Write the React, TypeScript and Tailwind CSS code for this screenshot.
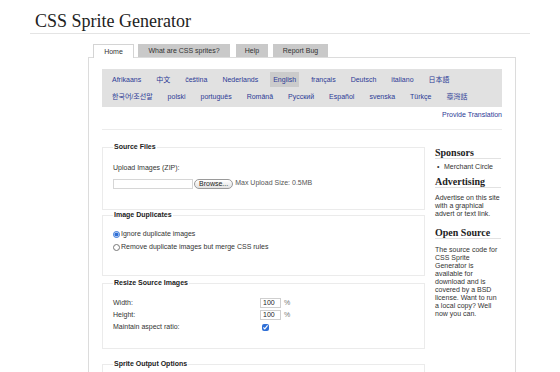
import React from "react";

const row1 = ["Afrikaans", "中文", "čeština", "Nederlands", "English", "français", "Deutsch", "italiano", "日本語"];
const row2 = ["한국어/조선말", "polski", "português", "Română", "Русский", "Español", "svenska", "Türkçe", "臺灣話"];

const LangRow: React.FC<{ items: string[] }> = ({ items }) => (
  <div className="flex h-[17px] items-center gap-x-[9px]">
    {items.map((l) => (
      <span
        key={l}
        className={
          "px-[3px] h-[15px] leading-[15px] text-[7px] text-[#2c3a96] " +
          (l === "English" ? "bg-[#cbcbcb]" : "")
        }
      >
        {l}
      </span>
    ))}
  </div>
);

const SideHead: React.FC<{ children: React.ReactNode; className?: string }> = ({ children, className }) => (
  <h3
    className={
      "font-['Liberation_Serif',serif] font-bold text-[10px] leading-[10px] text-[#222] border-b border-[#e2e2e2] " +
      (className || "")
    }
  >
    {children}
  </h3>
);

export default function App() {
  return (
    <div className="w-[560px] h-[372px] overflow-hidden bg-white text-[#333] font-['Liberation_Sans','Noto_Sans_CJK_SC',Arial,sans-serif]">
      <div className="px-[30px]">
        <h1 className="h-[34px] pt-[11px] pl-[5px] border-b border-[#e4e4e4] font-['Liberation_Serif',serif] text-[18px] leading-[20px] text-[#222]">
          CSS Sprite Generator
        </h1>
      </div>

      {/* tabs */}
      <div className="ml-[93px] mt-[10px] flex items-end text-[7px] text-[#333]">
        <div className="relative z-10 -mb-px w-[41px] h-[14px] leading-[13px] text-center bg-white border-l border-t border-r border-[#d4d4d4]">
          Home
        </div>
        <div className="ml-[4px] w-[92px] h-[13px] leading-[13px] text-center bg-[#c9c9c9]">What are CSS sprites?</div>
        <div className="ml-[6px] w-[32px] h-[13px] leading-[13px] text-center bg-[#c9c9c9]">Help</div>
        <div className="ml-[5px] w-[55px] h-[13px] leading-[13px] text-center bg-[#c9c9c9]">Report Bug</div>
      </div>

      {/* panel */}
      <div className="ml-[88px] w-[428px] h-[400px] border border-[#dcdcdc] px-[13px] pt-[11px]">
        <div className="bg-[#e1e1e1] pl-[7px] py-[2px]">
          <LangRow items={row1} />
          <LangRow items={row2} />
        </div>
        <div className="h-[23px] border-b border-[#ececec] pt-[3px] text-right text-[7px] leading-[10px] text-[#2c3a96]">
          Provide Translation
        </div>

        <div className="flex items-start pt-[12px]">
          <div className="w-[323px] text-[7px] text-[#333]">
            <fieldset className="border border-[#ebebeb] px-[10px] pb-[20px]">
              <legend className="px-[1px] font-bold leading-[10px] text-[#222]">Source Files</legend>
              <div className="mt-[11px] leading-[10px]">Upload Images (ZIP):</div>
              <div className="mt-[5px] flex items-center h-[11px]">
                <div className="w-[80px] h-[10px] border border-[#d6d6d6] bg-white" />
                <div className="ml-[1px] h-[10px] px-[4px] leading-[8px] rounded-full border border-[#9a9a9a] bg-gradient-to-b from-white to-[#e2e2e2] text-[#222]">
                  Browse...
                </div>
                <span className="ml-[2px] text-[#555]">Max Upload Size: 0.5MB</span>
              </div>
            </fieldset>

            <fieldset className="border border-[#ebebeb] px-[10px] pb-[21px]">
              <legend className="px-[1px] font-bold leading-[10px] text-[#222]">Image Duplicates</legend>
              <label className="mt-[8px] flex items-center h-[13px]">
                <input type="radio" name="dup" defaultChecked className="m-0 w-[7px] h-[7px] accent-[#2f6fd6]" />
                <span className="ml-[1px]">Ignore duplicate images</span>
              </label>
              <label className="flex items-center h-[13px]">
                <input type="radio" name="dup" className="m-0 w-[7px] h-[7px]" />
                <span className="ml-[1px]">Remove duplicate images but merge CSS rules</span>
              </label>
            </fieldset>

            <fieldset className="mt-[2px] border border-[#ebebeb] px-[10px] pb-[15px]">
              <legend className="px-[1px] font-bold leading-[10px] text-[#222]">Resize Source Images</legend>
              <div className="mt-[9px] flex items-center h-[12px]">
                <span className="w-[147px]">Width:</span>
                <div className="w-[21px] h-[10px] border border-[#cfcfcf] pl-[2px] leading-[8px] text-[#222]">100</div>
                <span className="ml-[3px] text-[#777]">%</span>
              </div>
              <div className="flex items-center h-[12px]">
                <span className="w-[147px]">Height:</span>
                <div className="w-[21px] h-[10px] border border-[#cfcfcf] pl-[2px] leading-[8px] text-[#222]">100</div>
                <span className="ml-[3px] text-[#777]">%</span>
              </div>
              <div className="flex items-center h-[12px]">
                <span className="w-[149px]">Maintain aspect ratio:</span>
                <input type="checkbox" defaultChecked className="m-0 w-[7px] h-[7px] accent-[#2f6fd6]" />
              </div>
            </fieldset>

            <fieldset className="mt-[10px] h-[40px] border border-[#ebebeb] px-[10px]">
              <legend className="px-[1px] font-bold leading-[10px] text-[#222]">Sprite Output Options</legend>
            </fieldset>
          </div>

          <div className="ml-[10px] w-[66px] pt-[6px] text-[7px] text-[#333] whitespace-nowrap">
            <SideHead>Sponsors</SideHead>
            <ul className="mt-[4px] leading-[8px]">
              <li className="flex">
                <span className="ml-[2px] w-[7px]">•</span>
                <span>Merchant Circle</span>
              </li>
            </ul>
            <SideHead className="mt-[6px]">Advertising</SideHead>
            <p className="mt-[6px] leading-[8px]">
              Advertise on this site
              <br />
              with a graphical
              <br />
              advert or text link.
            </p>
            <SideHead className="mt-[10px]">Open Source</SideHead>
            <p className="mt-[7px] leading-[8px]">
              The source code for
              <br />
              CSS Sprite
              <br />
              Generator is
              <br />
              available for
              <br />
              download and is
              <br />
              covered by a BSD
              <br />
              license. Want to run
              <br />
              a local copy? Well
              <br />
              now you can.
            </p>
          </div>
        </div>
      </div>
    </div>
  );
}
